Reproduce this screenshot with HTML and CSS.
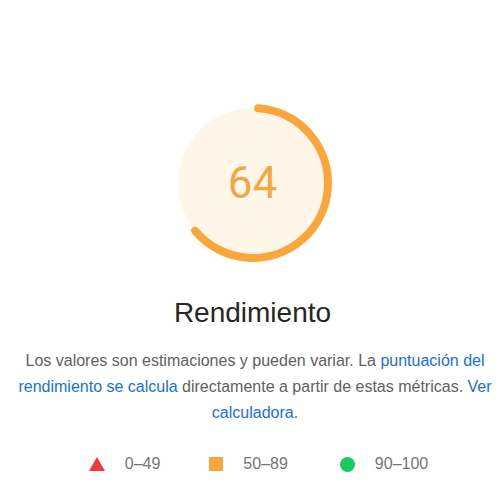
FILE: index.html
```html
<!DOCTYPE html>
<html lang="es">
<head>
  <meta charset="UTF-8">
  <title>Rendimiento</title>
  <link rel="stylesheet" href="styles.css">
</head>
<body>
  <div class="score">
    <div class="gauge">
      <svg viewBox="0 0 160 160" width="160" height="160">
        <circle class="base" cx="80" cy="80" r="75"></circle>
        <circle class="arc" cx="80" cy="80" r="75" stroke-dasharray="296 471.2" transform="rotate(-86 80 80)"></circle>
      </svg>
      <div class="num">64</div>
    </div>
    <div class="title">Rendimiento</div>
    <p class="desc">Los valores son estimaciones y pueden variar. La <a href="#">puntuación del rendimiento se calcula</a> directamente a partir de estas métricas. <a href="#">Ver calculadora</a>.</p>
    <div class="legend">
      <span class="item"><span class="fail"></span>0–49</span>
      <span class="item"><span class="avg"></span>50–89</span>
      <span class="item"><span class="pass"></span>90–100</span>
    </div>
  </div>
</body>
</html>
```

FILE: styles.css
```css
*{
  margin: 0;
  padding: 0;
  box-sizing: border-box;
}
body{
  font-family: "Liberation Sans", Arial, sans-serif;
  background: #fff;
}
.score{
  display: flex;
  flex-direction: column;
  align-items: center;
  padding-top: 103px;
  padding-left: 5px;
}
.gauge{
  position: relative;
  width: 160px;
  height: 160px;
}
.gauge svg{
  display: block;
}
.base{
  fill: #fff6ea;
  stroke: none;
}
.arc{
  fill: none;
  stroke: #fba63a;
  stroke-width: 8;
  stroke-linecap: round;
}
.num{
  position: absolute;
  top: 0;
  left: 0;
  width: 100%;
  line-height: 160px;
  text-align: center;
  font-size: 44px;
  color: #f6a63f;
  font-family: "Roboto", "Liberation Sans", sans-serif;
}
.title{
  margin-top: 34px;
  font-size: 28px;
  line-height: 32px;
  color: #262626;
}
.desc{
  margin-top: 19px;
  padding: 0 3px 0 8px;
  text-align: center;
  font-size: 16px;
  line-height: 26px;
  color: #616161;
}
.desc a{
  color: #1a6fd8;
  text-decoration: none;
}
.legend{
  display: flex;
  margin-top: 28px;
  font-size: 16px;
  line-height: 20px;
  color: #757575;
  margin-left: 12px;
}
.item{
  display: flex;
  align-items: center;
  margin-right: 49px;
}
.item:nth-child(2){
  margin-right: 52px;
}
.item:last-child{
  margin-right: 0;
}
.item > span{
  display: inline-block;
  margin-right: 20px;
}
.fail{
  width: 0;
  height: 0;
  border-left: 8px solid transparent;
  border-right: 8px solid transparent;
  border-bottom: 14px solid #eb3b3b;
}
.avg{
  width: 14px;
  height: 14px;
  background: #fba63a;
}
.pass{
  width: 15px;
  height: 15px;
  border-radius: 50%;
  background: #18c964;
}
```
